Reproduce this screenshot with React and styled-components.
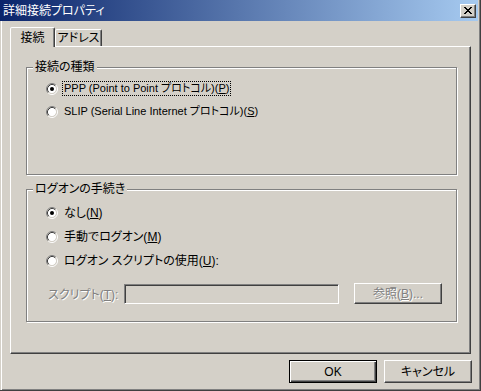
import React from 'react';
import styled, { createGlobalStyle } from 'styled-components';

const GlobalStyle = createGlobalStyle`
  html, body {
    margin: 0;
    padding: 0;
    background: #d4d0c8;
  }
  body {
    font-family: "Liberation Sans", "Noto Sans CJK JP", sans-serif;
    font-size: 12px;
    font-feature-settings: "palt";
    color: #000;
  }
`;

const Window = styled.div`
  box-sizing: border-box;
  width: 481px;
  height: 391px;
  padding-right: 2px;
  background: #d4d0c8;
  border-right: 1px solid #404040;
  border-bottom: 1px solid #404040;
  box-shadow: inset -1px -1px 0 #808080;
  display: flex;
  flex-direction: column;
`;

const TitleBar = styled.div`
  height: 21px;
  flex: none;
  display: flex;
  align-items: center;
  padding: 0 2px 0 3px;
  background: linear-gradient(to right, #0a246a, #a6caf0);
  color: #fff;
`;

const Title = styled.span`
  flex: 1;
  line-height: 14px;
`;

const CloseButton = styled.div`
  box-sizing: border-box;
  width: 16px;
  height: 14px;
  background: #d4d0c8;
  border: 1px solid;
  border-color: #fff #404040 #404040 #fff;
  box-shadow: inset -1px -1px 0 #808080;
  display: flex;
  align-items: center;
  justify-content: center;
`;

const Client = styled.div`
  flex: 1;
  display: flex;
  flex-direction: column;
  padding: 6px 0 0 9px;
  border-left: 1px solid #d4d0c8;
  box-shadow: inset 1px 0 0 #fff;
`;

const TabRow = styled.div`
  display: flex;
  align-items: flex-end;
  height: 19px;
`;

const Tab = styled.div`
  box-sizing: border-box;
  width: ${p => (p.$active ? 45 : 47)}px;
  height: ${p => (p.$active ? 20 : 17)}px;
  margin-bottom: ${p => (p.$active ? -1 : 0)}px;
  border: 1px solid;
  border-bottom: none;
  border-color: #fff #404040 transparent #fff;
  border-radius: 2px 2px 0 0;
  box-shadow: inset -1px 0 0 #808080;
  background: #d4d0c8;
  position: relative;
  z-index: ${p => (p.$active ? 1 : 0)};
  display: flex;
  align-items: center;
  justify-content: center;
  line-height: 14px;
`;

const Panel = styled.div`
  box-sizing: border-box;
  width: 461px;
  height: 308px;
  border: 1px solid;
  border-color: #fff #404040 #404040 #fff;
  box-shadow: inset -1px -1px 0 #808080;
  padding: 13px 13px 0 15px;
  display: flex;
  flex-direction: column;
`;

const Group = styled.fieldset`
  margin: 0;
  padding: 0;
  min-width: 0;
  border: 1px solid #808080;
  box-shadow: inset 1px 1px 0 #fff, 1px 1px 0 #fff;

  & + & {
    margin-top: 7px;
  }
`;

const Legend = styled.legend`
  margin-left: 6px;
  padding: 0 2px;
  line-height: 14px;
  background: #d4d0c8;
`;

const GroupBody = styled.div`
  box-sizing: border-box;
  height: ${p => p.$height}px;
  padding: ${p => p.$top}px 0 0 19px;
  display: flex;
  flex-direction: column;
`;

const Option = styled.div`
  display: flex;
  align-items: center;
  height: ${p => p.$h}px;
`;

const OptionText = styled.span`
  margin-left: 4px;
  padding: 0 1px;
  border: 1px dotted ${p => (p.$focus ? '#000' : 'transparent')};
  line-height: 13px;
  font-size: ${p => (p.$compact ? 11 : 12)}px;
  white-space: nowrap;
`;

const Key = styled.span`
  text-decoration: underline;
`;

const FieldRow = styled.div`
  display: flex;
  align-items: center;
  height: 21px;
  margin-top: 10px;
  padding-left: 2px;
`;

const FieldLabel = styled.span`
  width: 76px;
  color: #808080;
  text-shadow: 1px 1px 0 #fff;
  white-space: nowrap;
`;

const TextBox = styled.div`
  box-sizing: border-box;
  width: 215px;
  height: 20px;
  border: 1px solid;
  border-color: #808080 #fff #fff #808080;
  box-shadow: inset 1px 1px 0 #404040, inset -1px -1px 0 #d4d0c8;
  background: #d4d0c8;
`;

const PushButton = styled.button`
  box-sizing: border-box;
  width: 88px;
  height: ${p => p.$h || 23}px;
  margin: 0;
  padding: 0;
  font: inherit;
  font-size: 12px;
  background: #d4d0c8;
  color: ${p => (p.disabled ? '#808080' : '#000')};
  text-shadow: ${p => (p.disabled ? '1px 1px 0 #fff' : 'none')};
  border: 1px solid;
  border-color: ${p => (p.$default ? '#000' : '#fff #404040 #404040 #fff')};
  box-shadow: ${p =>
    p.$default
      ? 'inset 1px 1px 0 #fff, inset -1px -1px 0 #404040, inset -2px -2px 0 #808080'
      : 'inset -1px -1px 0 #808080'};
  line-height: 14px;
`;

const BrowseButton = styled(PushButton)`
  margin-left: 15px;
`;

const ButtonRow = styled.div`
  display: flex;
  justify-content: flex-end;
  gap: 7px;
  margin-top: 6px;
  padding-right: 6px;
`;

const Radio = ({ checked }) => (
  <svg width="12" height="12" viewBox="0 0 12 12">
    <circle cx="6" cy="6" r="4.2" fill="#fff" />
    <path d="M2.11 9.89 A5.5 5.5 0 0 1 9.89 2.11" stroke="#808080" fill="none" />
    <path d="M9.89 2.11 A5.5 5.5 0 0 1 2.11 9.89" stroke="#fff" fill="none" />
    <path d="M2.82 9.18 A4.5 4.5 0 0 1 9.18 2.82" stroke="#404040" fill="none" />
    <path d="M9.18 2.82 A4.5 4.5 0 0 1 2.82 9.18" stroke="#d4d0c8" fill="none" />
    {checked && <circle cx="6" cy="6" r="2" fill="#000" />}
  </svg>
);

const CloseGlyph = () => {
  const rows = [[0, 6], [1, 5], [2, 4], [3, 3], [2, 4], [1, 5], [0, 6]];
  return (
    <svg width="8" height="7" viewBox="0 0 8 7" shapeRendering="crispEdges">
      {rows.map(([a, b], i) => (
        <g key={i}>
          <rect x={a} y={i} width="2" height="1" fill="#000" />
          <rect x={b} y={i} width="2" height="1" fill="#000" />
        </g>
      ))}
    </svg>
  );
};

const App = () => (
  <>
    <GlobalStyle />
    <Window>
      <TitleBar>
        <Title>詳細接続プロパティ</Title>
        <CloseButton>
          <CloseGlyph />
        </CloseButton>
      </TitleBar>
      <Client>
        <TabRow>
          <Tab $active>接続</Tab>
          <Tab>アドレス</Tab>
        </TabRow>
        <Panel>
          <Group>
            <Legend>接続の種類</Legend>
            <GroupBody $height={100} $top={3}>
              <Option $h={23}>
                <Radio checked />
                <OptionText $focus $compact>
                  PPP (Point to Point プロトコル)(<Key>P</Key>)
                </OptionText>
              </Option>
              <Option $h={23}>
                <Radio />
                <OptionText $compact>
                  SLIP (Serial Line Internet プロトコル)(<Key>S</Key>)
                </OptionText>
              </Option>
            </GroupBody>
          </Group>
          <Group>
            <Legend>ログオンの手続き</Legend>
            <GroupBody $height={125} $top={5}>
              <Option $h={24}>
                <Radio checked />
                <OptionText>
                  なし(<Key>N</Key>)
                </OptionText>
              </Option>
              <Option $h={24}>
                <Radio />
                <OptionText>
                  手動でログオン(<Key>M</Key>)
                </OptionText>
              </Option>
              <Option $h={24}>
                <Radio />
                <OptionText>
                  ログオン スクリプトの使用(<Key>U</Key>):
                </OptionText>
              </Option>
              <FieldRow>
                <FieldLabel>
                  スクリプト(<Key>T</Key>):
                </FieldLabel>
                <TextBox />
                <BrowseButton disabled $h={21}>
                  参照(<Key>B</Key>)...
                </BrowseButton>
              </FieldRow>
            </GroupBody>
          </Group>
        </Panel>
        <ButtonRow>
          <PushButton $default>OK</PushButton>
          <PushButton>キャンセル</PushButton>
        </ButtonRow>
      </Client>
    </Window>
  </>
);

export default App;
